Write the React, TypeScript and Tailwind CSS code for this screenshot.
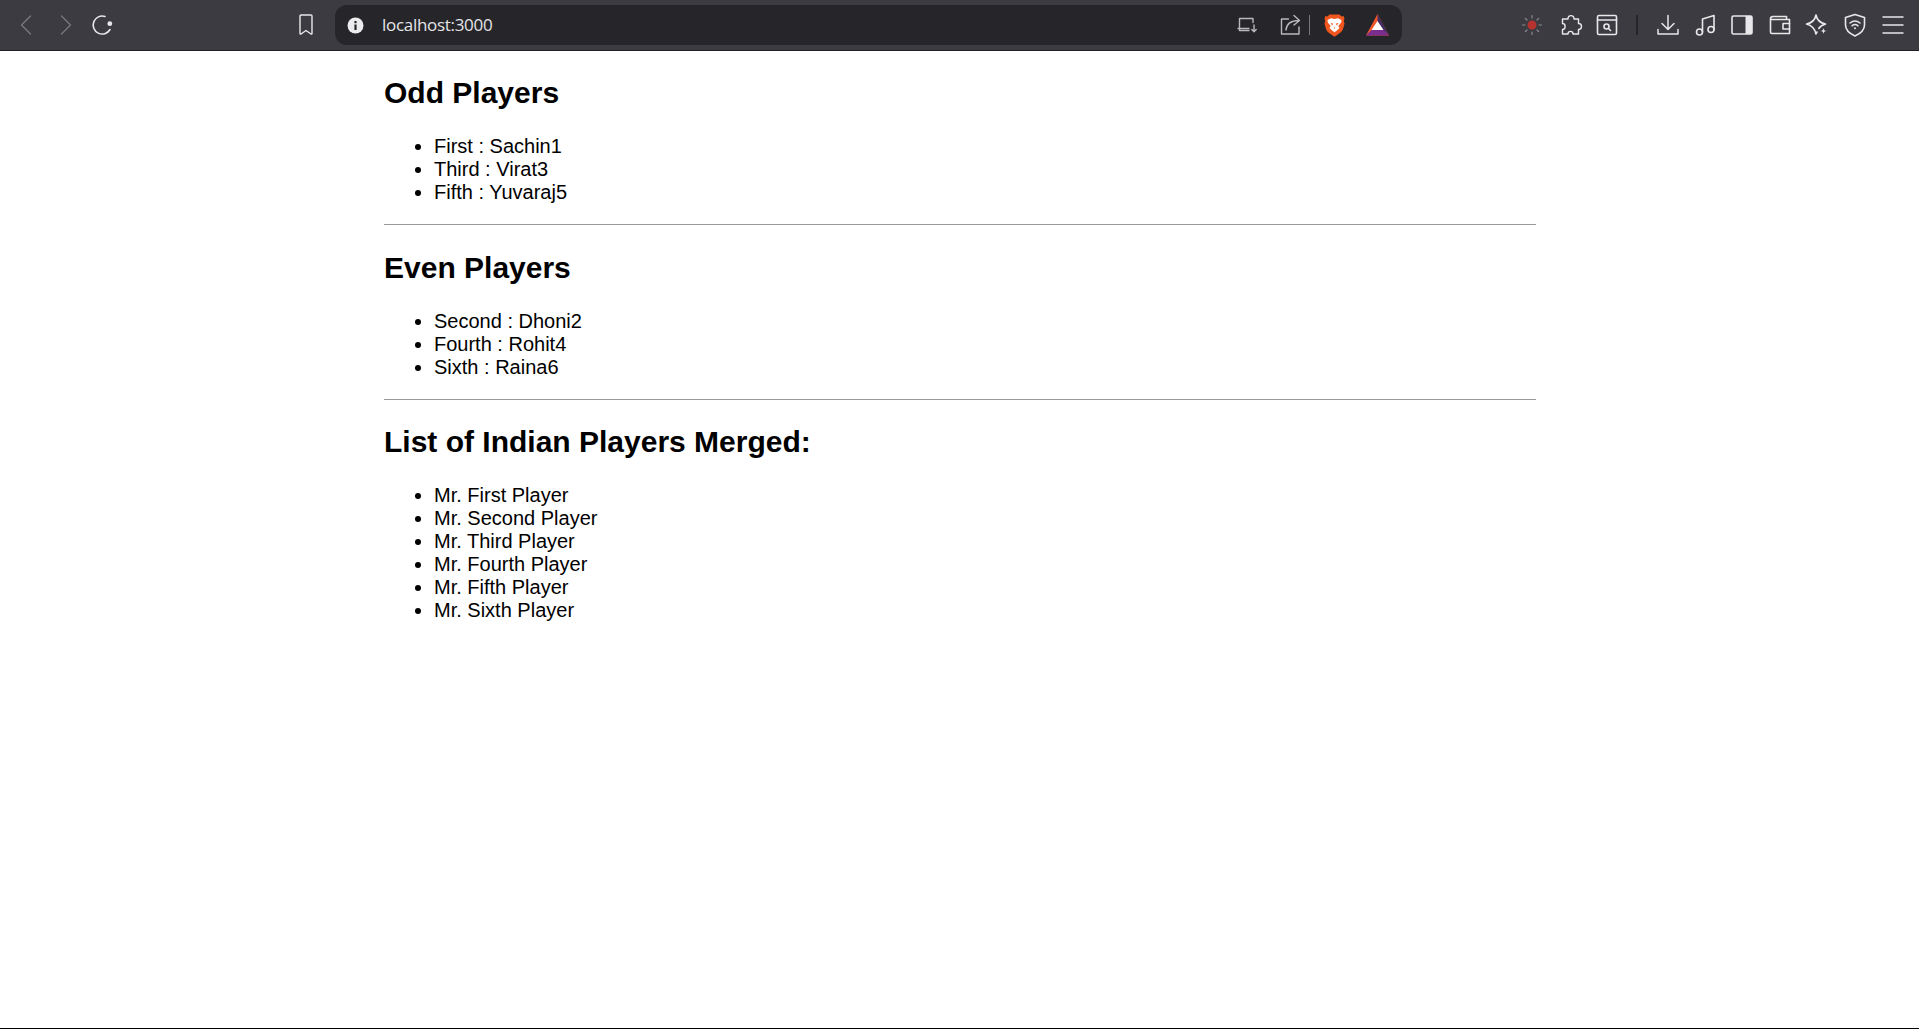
const oddPlayers = ["First : Sachin1", "Third : Virat3", "Fifth : Yuvaraj5"];
const evenPlayers = ["Second : Dhoni2", "Fourth : Rohit4", "Sixth : Raina6"];
const merged = ["First", "Second", "Third", "Fourth", "Fifth", "Sixth"];

function Ico({ children, className = "" }: { children: React.ReactNode; className?: string }) {
  return (
    <svg width="24" height="24" viewBox="0 0 24 24" fill="none" stroke="currentColor" strokeWidth="1.4" strokeLinecap="round" strokeLinejoin="round" className={className}>
      {children}
    </svg>
  );
}

function BraveLogo() {
  return (
    <svg width="21" height="23" viewBox="0 0 21 23">
      <path d="M5.5 0.5 H15.5 L17.5 2.5 L19.5 2 L20.5 4.5 L19.8 7 L20.5 9.5 L19.5 13.5 C18.5 17 17 18.5 14.5 20 L10.5 22.7 L6.5 20 C4 18.5 2.5 17 1.5 13.5 L0.5 9.5 L1.2 7 L0.5 4.5 L1.5 2 L3.5 2.5 Z" fill="#f0561d" />
      <path d="M3.5 6 L7 4.3 L10.5 5 L14 4.3 L17.5 6 L17.2 8.5 L14.3 12 L15.5 14 L13.5 16 L10.5 18.2 L7.5 16 L5.5 14 L6.7 12 L3.8 8.5 Z" fill="#fff" />
      <path d="M6.5 8.8 L9.2 9.8 L8.2 11.5 Z M14.5 8.8 L11.8 9.8 L12.8 11.5 Z M9.6 13.5 H11.4 L10.5 15 Z" fill="#f0561d" />
    </svg>
  );
}

function BatLogo() {
  return (
    <svg width="23" height="22" viewBox="0 0 23 22">
      <path d="M11.5 0 L23 21.5 H0 Z" fill="#f0562b" />
      <path d="M11.5 0 L23 21.5 L17 16 L11.5 7 Z" fill="#3e2c63" />
      <path d="M0 21.5 H23 L17.5 16 H5.5 Z" fill="#7b2c8f" />
      <path d="M11.5 7 L17.5 16 H5.5 Z" fill="#fff" />
    </svg>
  );
}

function ToolbarButton({ children, className = "" }: { children: React.ReactNode; className?: string }) {
  return <div className={`flex h-[38px] w-[38px] shrink-0 items-center justify-center ${className}`}>{children}</div>;
}

function BrowserBar() {
  return (
    <div className="flex h-[51px] shrink-0 items-center border-b border-[#202024] bg-[#3b3b41] text-[#e8e8ea]">
      <div className="ml-[8px] flex items-center">
        <ToolbarButton className="text-[#77777c]">
          <Ico><path d="M15.5 3 L6.5 12 L15.5 21" /></Ico>
        </ToolbarButton>
        <ToolbarButton className="text-[#77777c]">
          <Ico><path d="M8.5 3 L17.5 12 L8.5 21" /></Ico>
        </ToolbarButton>
        <ToolbarButton>
          <Ico>
            <path d="M14 3.5 A9 9 0 1 0 19 16.5" strokeWidth="1.6" />
            <circle cx="18.8" cy="10.7" r="2.4" fill="currentColor" stroke="none" />
          </Ico>
        </ToolbarButton>
      </div>
      <ToolbarButton className="ml-[165px]">
        <Ico><path d="M6 3 C6 2.5 6.5 2 7 2 H17 C17.5 2 18 2.5 18 3 V20.5 C18 21 17.5 21.2 17 21 L12 17.5 L7 21 C6.5 21.2 6 21 6 20.5 Z" /></Ico>
      </ToolbarButton>
      <div className="ml-[10px] flex h-[40px] w-[1067px] shrink-0 items-center rounded-[12px] bg-[#25252a] pl-[12px] pr-[4px]">
        <svg width="17" height="17" viewBox="0 0 17 17">
          <circle cx="8.5" cy="8.5" r="8" fill="#ececee" />
          <rect x="7.4" y="7.5" width="2.2" height="5.5" fill="#25252a" />
          <rect x="7.4" y="4" width="2.2" height="2.2" fill="#25252a" />
        </svg>
        <span className="ml-[18px] font-['Open_Sans',sans-serif] text-[17px] tracking-[-0.3px] text-[#e4e4e8]">localhost:3000</span>
        <div className="flex-1" />
        <ToolbarButton className="text-[#b9b9bd]">
          <Ico>
            <path d="M18 9.5 V5.5 H4.5 V17.5 H14" />
            <path d="M3 15.5 H14" />
            <path d="M19 12 V18.5 M16.8 16.5 L19 18.8 L21.2 16.5" />
          </Ico>
        </ToolbarButton>
        <ToolbarButton className="ml-[5px] text-[#b9b9bd]">
          <Ico>
            <path d="M10.5 6 H3.5 V21 H21 V14" />
            <path d="M8 17 C8.5 11 13 7.5 21 7.5 M16 2.5 L21.5 7.5 L16 12" />
          </Ico>
        </ToolbarButton>
        <div className="h-[20px] w-px shrink-0 bg-[#77777c]" />
        <div className="ml-[13px] flex w-[22px] shrink-0 justify-center"><BraveLogo /></div>
        <div className="ml-[20px] mr-[9px] flex w-[24px] shrink-0 justify-center"><BatLogo /></div>
      </div>
      <div className="flex-1" />
      <div className="mr-[7px] flex items-center">
        <ToolbarButton>
          <svg width="22" height="22" viewBox="0 0 22 22" fill="none" stroke="#8b8b8f" strokeWidth="1.2" strokeLinecap="round">
            <circle cx="11" cy="11" r="4.5" fill="#b5322f" stroke="none" />
            <path d="M11 1.5 V4 M11 18 V20.5 M1.5 11 H4 M18 11 H20.5 M4.3 4.3 L6 6 M16 16 L17.7 17.7 M4.3 17.7 L6 16 M16 6 L17.7 4.3" />
          </svg>
        </ToolbarButton>
        <ToolbarButton className="ml-[1px]">
          <Ico>
            <path d="M9 6 C9 1.5 15 1.5 15 6 H19.5 V10.5 C23.5 10.5 23.5 16.5 19.5 16.5 V21 H14 C14 17.5 9 17.5 9 21 H3.5 V16.5 C7 16.5 7 10.5 3.5 10.5 V6 Z" />
          </Ico>
        </ToolbarButton>
        <ToolbarButton className="-ml-[2px]">
          <Ico>
            <rect x="2.5" y="2.5" width="19" height="19" rx="1.5" strokeWidth="1.6" />
            <path d="M2.5 7 H21.5" strokeWidth="1.6" />
            <circle cx="11.5" cy="13.5" r="2.5" strokeWidth="1.6" />
            <path d="M13.5 15.5 L15.5 17.5" strokeWidth="1.6" />
          </Ico>
        </ToolbarButton>
        <div className="ml-[10px] mr-[12px] h-[20px] w-[2px] shrink-0 bg-[#25252a]" />
        <ToolbarButton className="-ml-[1px]">
          <Ico><path d="M12 2.5 V16 M6 10.5 L12 16.5 L18 10.5 M2 16.5 V21 H22 V16.5" strokeWidth="1.5" /></Ico>
        </ToolbarButton>
        <ToolbarButton>
          <Ico>
            <circle cx="5.5" cy="19" r="3" strokeWidth="1.6" />
            <circle cx="17" cy="16.5" r="3" strokeWidth="1.6" />
            <path d="M8.5 19 V6 L20 2.5 V16.5" strokeWidth="1.6" />
          </Ico>
        </ToolbarButton>
        <ToolbarButton className="-ml-[2px]">
          <svg width="22" height="22" viewBox="0 0 22 22">
            <rect x="1" y="2" width="20" height="18" rx="1.5" fill="none" stroke="currentColor" strokeWidth="1.6" />
            <rect x="14.5" y="2" width="6.5" height="18" fill="currentColor" />
          </svg>
        </ToolbarButton>
        <ToolbarButton>
          <Ico>
            <path d="M18.5 6.5 V3.5 H5 C3 3.5 2.5 4.5 2.5 6 V19 C2.5 20 3 20.5 4 20.5 H21.5 V6.5 H3" strokeWidth="1.6" />
            <path d="M21.5 10.5 H15 V16 H21.5" strokeWidth="1.6" />
          </Ico>
        </ToolbarButton>
        <ToolbarButton className="-ml-[1px]">
          <Ico>
            <path d="M11 2 C12 7 15 10 20.5 11 C17 12 15.2 13.2 13.8 15.5 M11 21 C10 16 7 12.5 1.5 11 C7 10 10 7 11 2 M11 21 C11.3 20.3 11.6 19.6 12 19" strokeWidth="1.6" />
            <path d="M18.5 15 C18.8 17 19.5 17.7 21.5 18 C19.5 18.3 18.8 19 18.5 21 C18.2 19 17.5 18.3 15.5 18 C17.5 17.7 18.2 17 18.5 15 Z" fill="currentColor" stroke="none" />
          </Ico>
        </ToolbarButton>
        <ToolbarButton>
          <Ico>
            <path d="M12 1.5 L21.5 4.5 V12 C21.5 17 17.5 20.5 12 23 C6.5 20.5 2.5 17 2.5 12 V4.5 Z" strokeWidth="1.6" />
            <path d="M7 10 C10 7.5 14 7.5 17 10 M9 12.8 C10.8 11.3 13.2 11.3 15 12.8" strokeWidth="1.5" />
            <circle cx="12" cy="15.3" r="1" fill="currentColor" stroke="none" />
          </Ico>
        </ToolbarButton>
        <ToolbarButton>
          <Ico><path d="M1.5 4 H22.5 M1.5 12 H22.5 M1.5 20 H22.5" strokeWidth="1.6" strokeLinecap="butt" /></Ico>
        </ToolbarButton>
      </div>
    </div>
  );
}

function PlayerList({ items }: { items: string[] }) {
  return (
    <ul className="my-[20px] list-disc pl-[50px] leading-[23px]">
      {items.map((item) => (
        <li key={item}>{item}</li>
      ))}
    </ul>
  );
}

export default function App() {
  return (
    <div className="flex h-[1029px] flex-col overflow-hidden border-b border-black bg-white font-['Liberation_Sans',Arial,sans-serif] text-[20px] text-black">
      <BrowserBar />
      <div className="ml-[384px] w-[1152px]">
        <h2 className="my-[24.9px] text-[30px] leading-[34.5px] font-bold">Odd Players</h2>
        <PlayerList items={oddPlayers} />
        <hr className="my-[10px] border-t border-[#9a9a9a]" />
        <h2 className="mt-[25.7px] mb-[24.1px] text-[30px] leading-[34.5px] font-bold">Even Players</h2>
        <PlayerList items={evenPlayers} />
        <hr className="my-[10px] border-t border-[#9a9a9a]" />
        <h2 className="mt-[25.7px] mb-[24.1px] text-[30px] leading-[34.5px] font-bold">List of Indian Players Merged:</h2>
        <PlayerList items={merged.map((name) => `Mr. ${name} Player`)} />
      </div>
    </div>
  );
}
